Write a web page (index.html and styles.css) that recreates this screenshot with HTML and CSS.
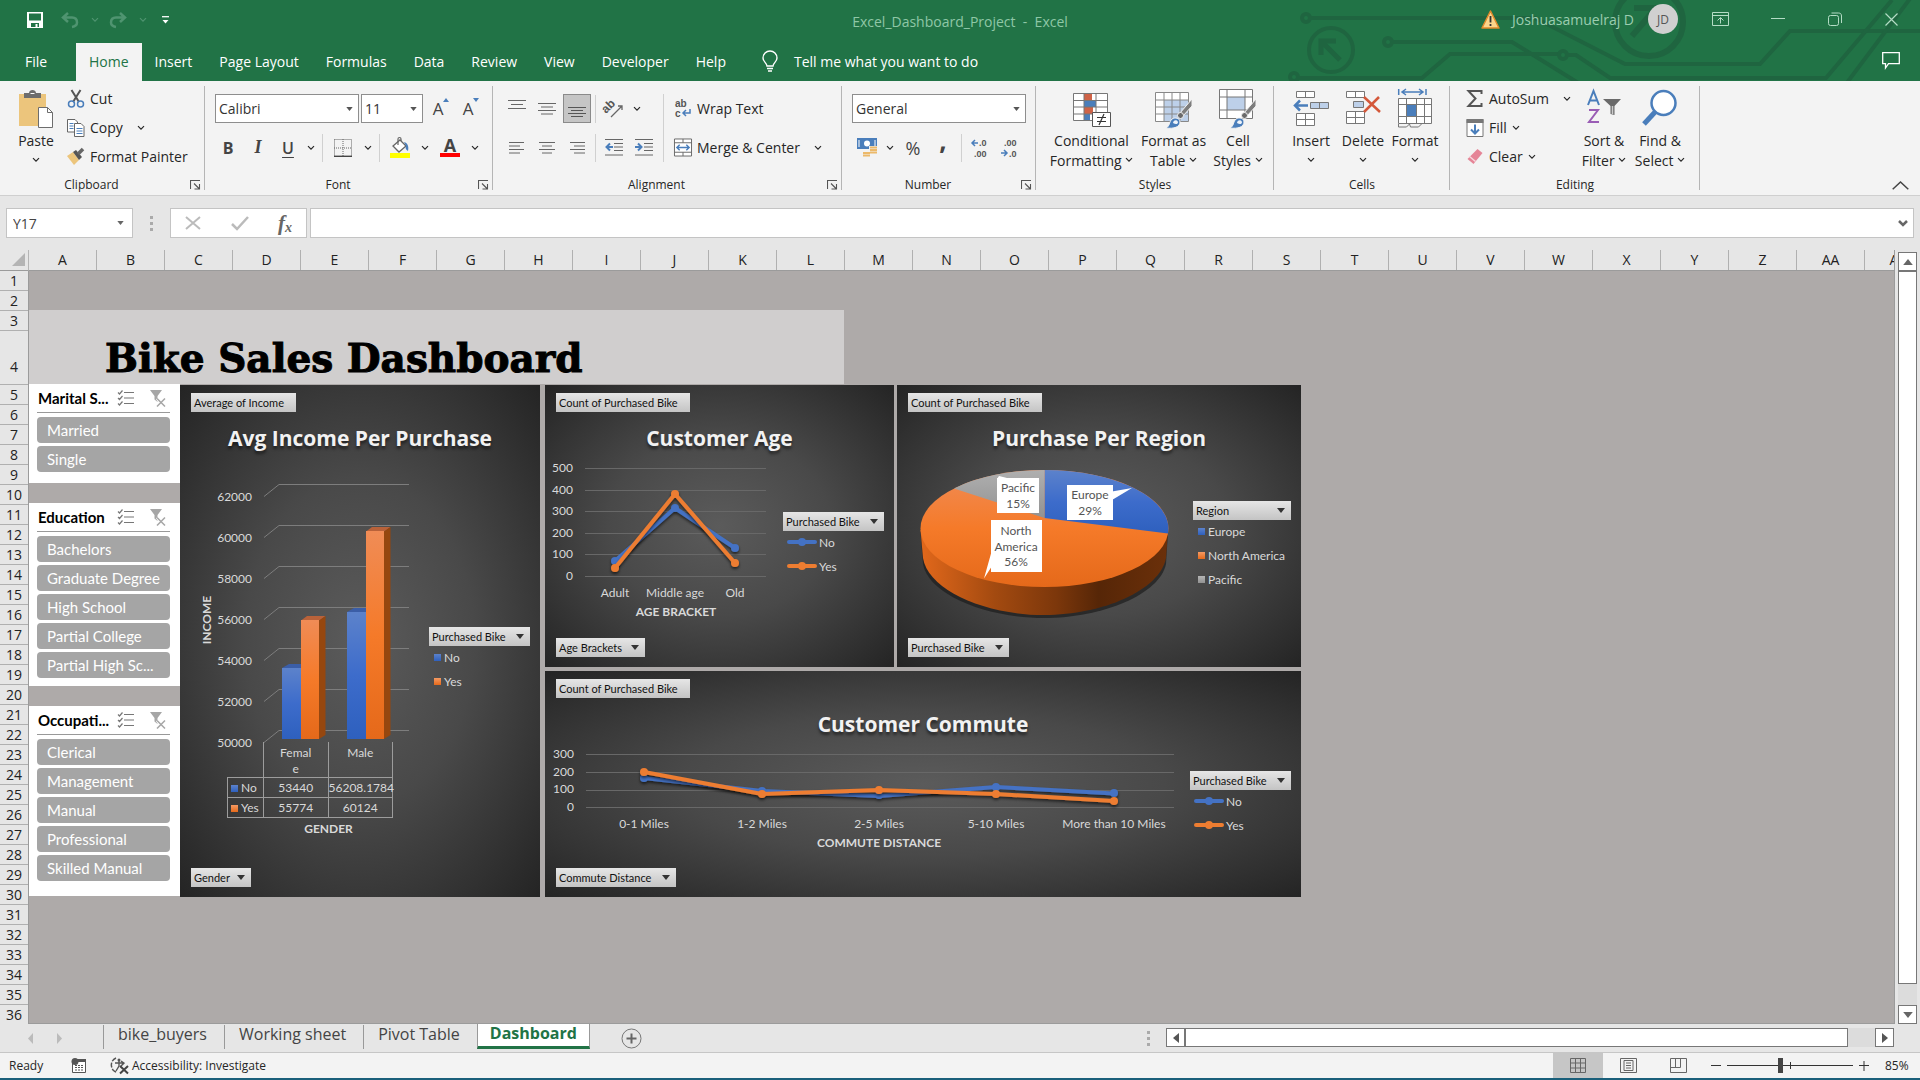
FILE: index.html
```html
<!DOCTYPE html>
<html lang="en">
<head>
<meta charset="utf-8">
<title>Excel_Dashboard_Project - Excel</title>
<link rel="stylesheet" href="styles.css">
</head>
<body>
<svg class="defs" aria-hidden="true">
  <defs>
    <symbol id="chev" viewBox="0 0 8 6"><path d="M1 1.200 4 4.200 7 1.200" fill="none" stroke="currentColor" stroke-width="1.200"/></symbol>
    <symbol id="tri" viewBox="0 0 8 5"><path d="M0 0h8L4 5z" fill="currentColor"/></symbol>
    <symbol id="launch" viewBox="0 0 11 10"><path d="M.5 9V.5H10M4 3.500l5 5M9.500 4v5H4.500" fill="none" stroke="#555" stroke-width="1.1"/></symbol>
    <symbol id="multi" viewBox="0 0 18 16"><path d="M1 2.500 2.500 4 5.500.5M1 8 2.500 9.500 5.500 6M1 13.500 2.500 15 5.500 11.500M7 2.500h10M7 8h10M7 13.500h10" fill="none" stroke="#777" stroke-width="1.200"/></symbol>
    <symbol id="nofilter" viewBox="0 0 16 17"><path d="M0 0h12L7.500 6v6L4.500 9.500V6z" fill="#a6a6a6"/><path d="M7 8.500l8 8M15 8.500l-8 8" stroke="#fff" stroke-width="3"/><path d="M7 8.500l8 8M15 8.500l-8 8" stroke="#a6a6a6" stroke-width="1.500"/></symbol>
    <symbol id="brush" viewBox="0 0 28 34"><path d="M27 4v7l-9 10-3-3z" fill="#7d7d7d" stroke="#f3f3f3"/><circle cx="15.500" cy="20.500" r="3" fill="#6a6a6a" stroke="#f3f3f3"/><path d="M1 33c4-2 3-6 6-9 3-2 8-1 8 3 0 5-6 7-14 6z" fill="#4a7ebb" stroke="#f3f3f3"/><path d="M8 28c0-3 4-4 5-1 0 2-2 3-5 1z" fill="#eef3fa"/></symbol>
    <linearGradient id="gBlue" x1="0" y1="0" x2="0" y2="1"><stop offset="0" stop-color="#5c82cb"/><stop offset=".5" stop-color="#3d6ccb"/><stop offset="1" stop-color="#2e60be"/></linearGradient>
    <linearGradient id="gOrange" x1="0" y1="0" x2="0" y2="1"><stop offset="0" stop-color="#f08c56"/><stop offset=".5" stop-color="#f57a29"/><stop offset="1" stop-color="#e5691a"/></linearGradient>
    <linearGradient id="gGray" x1="0" y1="0" x2="0" y2="1"><stop offset="0" stop-color="#afafaf"/><stop offset="1" stop-color="#929292"/></linearGradient>
    <linearGradient id="gRim" x1="0" y1="0" x2="1" y2="0"><stop offset="0" stop-color="#e2681b"/><stop offset=".3" stop-color="#a34a10"/><stop offset=".55" stop-color="#7c370b"/><stop offset=".72" stop-color="#562607"/><stop offset="1" stop-color="#6b300a"/></linearGradient>
    <filter id="soft" x="-20%" y="-20%" width="140%" height="150%"><feDropShadow dx="0" dy="2" stdDeviation="1.500" flood-opacity=".6"/></filter>
  </defs>
</svg>

<header class="top">
  <svg class="circuit" viewBox="0 0 640 81" aria-hidden="true">
    <g fill="none" stroke="#1f6540" stroke-width="4">
      <circle cx="26" cy="18" r="4"/><path d="M31 18H255L345 64H480L510 31H640"/>
      <circle cx="108" cy="42" r="4"/><path d="M113 42H232L300 84"/>
      <circle cx="14" cy="77" r="4"/><path d="M19 78H142L170 54H278"/><circle cx="283" cy="55" r="4"/><path d="M288 55H296L330 78H546L612 0M566 84 632-4"/>
      <circle cx="51" cy="50" r="22"/><path d="M41 55V41H56M42 42 60 60" stroke-width="5"/>
      <circle cx="369" cy="22" r="34" stroke-width="6"/><path d="M354 8H376V26M376 8 352 36" stroke-width="6"/>
    </g>
  </svg>
  <div class="titlebar">
    <div class="quick">
      <button class="q" aria-label="Save"><svg width="16" height="16" viewBox="0 0 16 16"><path d="M0 0h16v16H0z" fill="#fff"/><path d="M2 1.500h12v7H2z" fill="#217346"/><path d="M4 11h8v4H4z" fill="#217346"/><path d="M8.500 12h2v3h-2z" fill="#fff"/></svg></button>
      <button class="q dim" aria-label="Undo"><svg width="18" height="16" viewBox="0 0 18 16"><path d="M7 1 2 5.500 7 10M2 5.500h9c4 0 5 3 5 5s-2 4-5 4.500" fill="none" stroke="currentColor" stroke-width="2.500"/></svg></button>
      <button class="q dim c" aria-label="Undo list"><svg width="8" height="6"><use href="#chev"/></svg></button>
      <button class="q dim" aria-label="Redo"><svg width="18" height="16" viewBox="0 0 18 16"><path d="M11 1l5 4.500L11 10M16 5.500H7c-4 0-5 3-5 5s2 4 5 4.500" fill="none" stroke="currentColor" stroke-width="2.500"/></svg></button>
      <button class="q dim c" aria-label="Redo list"><svg width="8" height="6"><use href="#chev"/></svg></button>
      <button class="q last" aria-label="Customize"><svg width="7" height="8" viewBox="0 0 7 8"><path d="M0 .7h7" stroke="#fff" stroke-width="1.300"/><path d="M.5 4h6L3.500 7.500z" fill="#fff"/></svg></button>
    </div>
    <div class="doc">Excel_Dashboard_Project &nbsp;- &nbsp;Excel</div>
    <div class="account">
      <svg width="19" height="19" viewBox="0 0 19 19"><path d="M9.500 1 18 18H1z" fill="#fcd58b" stroke="#e08a2c" stroke-width="1.500" stroke-linejoin="round"/><path d="M9.500 6v6.500M9.500 14v2" stroke="#333" stroke-width="1.800"/></svg>
      <span class="user">Joshuasamuelraj D</span>
      <span class="avatar">JD</span>
      <button class="win" aria-label="Ribbon options"><svg width="17" height="14" viewBox="0 0 17 14"><path d="M.5.5h16v13H.5zM.5 3.500h16M8.500 11.500V6M5.500 8.500l3-3 3 3" fill="none" stroke="currentColor"/></svg></button>
      <button class="win" aria-label="Minimize"><svg width="14" height="14" viewBox="0 0 14 14"><path d="M0 6.500h14" stroke="currentColor"/></svg></button>
      <button class="win" aria-label="Restore"><svg width="14" height="14" viewBox="0 0 14 14"><rect x=".5" y="3.500" width="10" height="10" rx="2" fill="none" stroke="currentColor"/><path d="M3.500 1h7c2 0 3 1 3 3v7" fill="none" stroke="currentColor"/></svg></button>
      <button class="win" aria-label="Close"><svg width="13" height="13" viewBox="0 0 13 13"><path d="M.5.5l12 12M12.500.5l-12 12" stroke="currentColor" stroke-width="1.200"/></svg></button>
    </div>
  </div>
  <nav class="tabs">
    <a href="#" class="file">File</a><a href="#" class="on">Home</a><a href="#">Insert</a><a href="#">Page Layout</a><a href="#">Formulas</a><a href="#">Data</a><a href="#">Review</a><a href="#">View</a><a href="#">Developer</a><a href="#">Help</a>
    <a href="#" class="tell"><svg width="16" height="21" viewBox="0 0 16 21"><path d="M5 15c0-3-4-4-4-8a7 7 0 0 1 14 0c0 4-4 5-4 8zM5 17.500h6M6 20h4" fill="none" stroke="#fff" stroke-width="1.400"/></svg>Tell me what you want to do</a>
    <button class="comment" aria-label="Comments"><svg width="18" height="17" viewBox="0 0 18 17"><path d="M.7.7h16.600v11H6.500L3.500 16v-4.300H.7z" fill="none" stroke="#fff" stroke-width="1.300"/></svg></button>
  </nav>
</header>

<section class="ribbon">
  <div class="group g-clip">
    <div class="body">
      <button class="big paste"><svg class="ic" width="34" height="40" viewBox="0 0 34 40"><path d="M0 5h27v32H0z" fill="#ecc57c"/><path d="M5 9V4h5c0-4 7-4 7 0h5v5z" fill="#6d6d6d"/><path d="M11.500 4.500h4" stroke="#fff"/><path d="M19.500 18.500h9l5 5v15h-14z" fill="#fff" stroke="#6d6d6d"/><path d="M28.500 18.500v5h5" fill="none" stroke="#6d6d6d"/></svg><span>Paste</span><svg class="cv" width="8" height="6"><use href="#chev"/></svg></button>
      <div class="stack">
        <button class="line"><svg class="si" width="17" height="18" viewBox="0 0 17 18"><path d="M4 0 11.500 12M13 0 5.500 12" stroke="#555" stroke-width="2"/><g fill="none" stroke="#4a7ebb" stroke-width="1.500"><circle cx="4" cy="14" r="3"/><circle cx="13" cy="14" r="3"/></g></svg>Cut</button>
        <button class="line"><svg class="si" width="18" height="18" viewBox="0 0 18 18"><path d="M.5.5H8l2.500 2.500v10H.5z" fill="#fff" stroke="#666"/><path d="M2.500 4.500h4M2.500 7h4M2.500 9.500h4" stroke="#4a7ebb"/><path d="M7.500 4.500H14l3 3v10H7.500z" fill="#fff" stroke="#666"/><path d="M9.500 9.500h6M9.500 12h6M9.500 14.500h6" stroke="#4a7ebb"/></svg>Copy<svg class="cv far" width="8" height="6"><use href="#chev"/></svg></button>
        <button class="line"><svg class="si" width="18" height="17" viewBox="0 0 18 17"><path d="M0 8 6 4l6 8-5 5z" fill="#ecc57c"/><path d="M6 4l3-2 6 7-3 3z" fill="#555"/><path d="M11 6 16 1" stroke="#666" stroke-width="3.500"/></svg>Format Painter</button>
      </div>
    </div>
    <div class="label has">Clipboard</div><button class="dlg" aria-label="Clipboard settings"><svg width="11" height="10"><use href="#launch"/></svg></button>
  </div>

  <div class="group g-font">
    <div class="body two">
      <div class="row">
        <label class="combo family"><select aria-label="Font"><option>Calibri</option></select><svg width="7" height="4"><use href="#tri"/></svg></label>
        <label class="combo size"><select aria-label="Font size"><option>11</option></select><svg width="7" height="4"><use href="#tri"/></svg></label>
        <button class="ib first" aria-label="Grow font"><span class="ga">A</span><svg class="up" width="6" height="4" viewBox="0 0 6 4"><path d="M0 4h6L3 0z" fill="#4a7ebb"/></svg></button>
        <button class="ib" aria-label="Shrink font"><span class="ga">A</span><svg class="up" width="6" height="4" viewBox="0 0 6 4"><path d="M0 0h6L3 4z" fill="#4a7ebb"/></svg></button>
      </div>
      <div class="row fmt">
        <button class="ib"><b>B</b></button><button class="ib"><i>I</i></button><button class="ib"><u>U</u></button><button class="cb" aria-label="Underline list"><svg width="8" height="6"><use href="#chev"/></svg></button>
        <span class="sep"></span>
        <button class="ib w" aria-label="Borders"><svg width="18" height="18" viewBox="0 0 18 18"><path d="M.5.5h17v17M.5.5v17M9 0v17M0 9h18" fill="none" stroke="#666" stroke-dasharray="1 1"/><path d="M0 17.300h18" stroke="#444" stroke-width="1.400"/></svg></button><button class="cb" aria-label="Borders list"><svg width="8" height="6"><use href="#chev"/></svg></button>
        <span class="sep"></span>
        <button class="ib w" aria-label="Fill color"><svg width="20" height="21" viewBox="0 0 20 21"><path d="M10 3 16 9 9 15 3 9z" fill="#fff" stroke="#666" stroke-width="1.300"/><path d="M8 8V2c0-2 3-2 3 0v2" fill="none" stroke="#666" stroke-width="1.200"/><path d="M14 5c4 1 5 5 4 9-2-1-3-3-2-5z" fill="#4a7ebb"/><path d="M0 16h20v5H0z" fill="#ff0"/></svg></button><button class="cb" aria-label="Fill color list"><svg width="8" height="6"><use href="#chev"/></svg></button>
        <button class="ib w colour" aria-label="Font color"><span>A</span></button><button class="cb" aria-label="Font color list"><svg width="8" height="6"><use href="#chev"/></svg></button>
      </div>
    </div>
    <div class="label has">Font</div><button class="dlg" aria-label="Font settings"><svg width="11" height="10"><use href="#launch"/></svg></button>
  </div>

  <div class="group g-align">
    <div class="body two cols">
      <div class="rows">
        <div class="row">
          <button class="ib" aria-label="Top align"><svg width="18" height="18" viewBox="0 0 18 18"><path d="M0 .5h18M3 4.500h12M0 8.500h18" stroke="#666"/></svg></button>
          <button class="ib" aria-label="Middle align"><svg width="18" height="12" viewBox="0 0 18 12"><path d="M0 .5h18M3 4h12M0 7.500h18M3 11h12" stroke="#666"/></svg></button>
          <button class="ib sel" aria-label="Bottom align"><svg width="18" height="18" viewBox="0 0 18 18"><path d="M0 7.500h18M3 10.500h12M0 13.500h18M3 16.500h12" stroke="#555"/></svg></button>
          <span class="sep"></span>
          <button class="ib" aria-label="Orientation"><svg width="20" height="20" viewBox="0 0 20 20"><text class="ict" x="2" y="15" transform="rotate(-45 2 15)" font-size="12">ab</text><path d="M7 18 18 7M18 11V7h-4" fill="none" stroke="#666" stroke-width="1.300"/></svg></button><button class="cb" aria-label="Orientation list"><svg width="8" height="6"><use href="#chev"/></svg></button>
        </div>
        <div class="row">
          <button class="ib" aria-label="Align left"><svg width="16" height="12" viewBox="0 0 16 12"><path d="M0 .5h15M0 4h11M0 7.500h15M0 11h11" stroke="#666"/></svg></button>
          <button class="ib" aria-label="Center"><svg width="16" height="12" viewBox="0 0 16 12"><path d="M0 .5h16M3 4h10M0 7.500h16M3 11h10" stroke="#666"/></svg></button>
          <button class="ib" aria-label="Align right"><svg width="16" height="12" viewBox="0 0 16 12"><path d="M1 .5h15M5 4h11M1 7.500h15M5 11h11" stroke="#666"/></svg></button>
          <span class="sep"></span>
          <button class="ib" aria-label="Decrease indent"><svg width="18" height="17" viewBox="0 0 18 17"><path d="M0 .5h18M9 4.500h9M9 8h9M9 11.500h9M0 16h18" stroke="#666"/><path d="M8 8H2M5 4.500 1.500 8 5 11.500" fill="none" stroke="#4a7ebb" stroke-width="2"/></svg></button>
          <button class="ib" aria-label="Increase indent"><svg width="18" height="17" viewBox="0 0 18 17"><path d="M0 .5h18M9 4.500h9M9 8h9M9 11.500h9M0 16h18" stroke="#666"/><path d="M0 8h6M3 4.500 6.500 8 3 11.500" fill="none" stroke="#4a7ebb" stroke-width="2"/></svg></button>
        </div>
      </div>
      <span class="sep tall"></span>
      <div class="rows">
        <button class="line tight"><svg class="si" width="18" height="22" viewBox="0 0 18 22"><text class="ict" x="1" y="9" font-size="10">ab</text><text class="ict" x="1" y="19" font-size="10">c</text><path d="M16 11v4H9M12 12l-3 3 3 3" fill="none" stroke="#4a7ebb" stroke-width="1.500"/></svg>Wrap Text</button>
        <button class="line tight"><svg class="si" width="19" height="19" viewBox="0 0 19 19"><path d="M.5.5h18v18H.5zM.5 4.500h18M.5 14.500h18M9.500.5v4M9.500 14.500v4" fill="#fff" stroke="#666"/><path d="M3 9.500h13M6 6.500l-3 3 3 3M13 6.500l3 3-3 3" fill="none" stroke="#4a7ebb" stroke-width="1.500"/></svg>Merge &amp; Center<svg class="cv far" width="8" height="6"><use href="#chev"/></svg></button>
      </div>
    </div>
    <div class="label has">Alignment</div><button class="dlg" aria-label="Alignment settings"><svg width="11" height="10"><use href="#launch"/></svg></button>
  </div>

  <div class="group g-num">
    <div class="body two">
      <div class="row"><label class="combo number"><select aria-label="Number format"><option>General</option></select><svg width="7" height="4"><use href="#tri"/></svg></label></div>
      <div class="row">
        <button class="ib" aria-label="Currency"><svg width="21" height="19" viewBox="0 0 21 19"><path d="M0 0h20v11H0z" fill="#4a7ebb"/><circle cx="10" cy="5.500" r="3" fill="#fff"/><path d="M2 2v7M18 2v7" stroke="#fff"/><path d="M12 8h8v11H5v-6h7z" fill="#f3f3f3"/><path d="M13 9.500h7M13 12h7M13 14.500h7M6 15h7M6 17.500h7" stroke="#ecb96a" stroke-width="2"/></svg></button><button class="cb" aria-label="Currency list"><svg width="8" height="6"><use href="#chev"/></svg></button>
        <button class="ib pct">%</button><button class="ib"><span class="comma">,</span></button>
        <span class="sep"></span>
        <button class="ib" aria-label="Increase decimal"><svg width="18" height="22" viewBox="0 0 18 22"><text class="ict" x="8" y="9" font-size="9">.0</text><text class="ict" x="3" y="20" font-size="9">.00</text><path d="M7 6H1M4 3 1 6l3 3" fill="none" stroke="#4a7ebb" stroke-width="1.500"/></svg></button>
        <button class="ib" aria-label="Decrease decimal"><svg width="18" height="22" viewBox="0 0 18 22"><text class="ict" x="3" y="9" font-size="9">.00</text><text class="ict" x="8" y="20" font-size="9">.0</text><path d="M0 16h6M3 13l3 3-3 3" fill="none" stroke="#4a7ebb" stroke-width="1.500"/></svg></button>
      </div>
    </div>
    <div class="label has">Number</div><button class="dlg" aria-label="Number settings"><svg width="11" height="10"><use href="#launch"/></svg></button>
  </div>

  <div class="group g-styles">
    <div class="body">
      <button class="big cf"><svg class="ic" width="38" height="40" viewBox="0 0 38 40"><path d="M.5 4.500h34v27H.5z" fill="#fff"/><path d="M11 5h8v6h-8zM11 18h9v7h-9z" fill="#cf6347"/><path d="M11 11h12v7H11zM11 25h6v7h-6z" fill="#4a7ebb"/><path d="M.5 4.500h34v27H.5zM.5 11.500h34M.5 18h34M.5 25h34M11 4v28M23 4v28" fill="none" stroke="#777"/><path d="M19.500 23.500h18v14h-18z" fill="#fff" stroke="#555"/><path d="M24 28.500h9M24 32.500h9M31 25l-5 11" stroke="#333" stroke-width="1.200"/></svg><span>Conditional<br>Formatting <svg class="in" width="8" height="6"><use href="#chev"/></svg></span></button>
      <button class="big fat"><svg class="ic" width="38" height="40" viewBox="0 0 38 40"><path d="M.5 3.500h33v29H.5z" fill="#fff"/><path d="M9 11h24v21H9z" fill="#bdd0e9"/><path d="M.5 3.500h33v29H.5zM.5 11h33M.5 18h33M.5 25h33M9 3v29M17 3v29M25 3v29" fill="none" stroke="#888"/><use href="#brush" x="10" y="6" width="28" height="34"/></svg><span>Format as<br>Table <svg class="in" width="8" height="6"><use href="#chev"/></svg></span></button>
      <button class="big cs"><svg class="ic" width="38" height="40" viewBox="0 0 38 40"><path d="M.5.5h33v29H.5z" fill="#fff"/><path d="M8 8h18v13H8z" fill="#bdd0e9"/><path d="M.5.5h33v29H.5zM.5 8h33M.5 21h33M8 0v30M26 0v30" fill="none" stroke="#777"/><use href="#brush" x="10" y="6" width="28" height="34"/></svg><span>Cell<br>Styles <svg class="in" width="8" height="6"><use href="#chev"/></svg></span></button>
    </div>
    <div class="label">Styles</div>
  </div>

  <div class="group g-cells">
    <div class="body">
      <button class="big"><svg class="ic" width="36" height="40" viewBox="0 0 36 40"><g fill="#fff" stroke="#777"><path d="M3.500 2.500h18v6h-18zM12.500 2.500v6M3.500 24.500h18v12h-18zM3.500 30.500h18M12.500 24.500v12"/><path d="M17.500 13.500h18v6h-18zM26.500 13.500v6" fill="#bdd0e9"/></g><path d="M15 16.500H2M7 11.500l-5 5 5 5" fill="none" stroke="#4a7ebb" stroke-width="2.500"/></svg><span>Insert</span><svg class="cv" width="8" height="6"><use href="#chev"/></svg></button>
      <button class="big"><svg class="ic" width="36" height="40" viewBox="0 0 36 40"><g fill="#fff" stroke="#777"><path d="M1.500 2.500h18v6h-18zM10.500 2.500v6M1.500 22.500h18v12h-18zM1.500 28.500h18M10.500 22.500v12"/><path d="M8.500 12.500h10v6h-10z" fill="#bdd0e9"/></g><path d="M19 8l16 15M34 8 19 23" stroke="#d4583a" stroke-width="2.500"/></svg><span>Delete</span><svg class="cv" width="8" height="6"><use href="#chev"/></svg></button>
      <button class="big"><svg class="ic" width="34" height="40" viewBox="0 0 34 40"><path d="M.7 0v6M28 0v6M4 3h21M8 0 4 3l4 3M21 0l4 3-4 3" fill="none" stroke="#4a7ebb" stroke-width="1.500"/><path d="M.5 9.500h33v25H.5z" fill="#fff"/><path d="M9 16h9v11H9z" fill="#4a7ebb"/><path d="M.5 9.500h33v25H.5zM.5 15.500h33M.5 27.500h33M8.500 9.500v25M18.500 9.500v25M26.500 9.500v25M.5 35v3h8l3-3 1 3h8l3-3" fill="none" stroke="#777"/></svg><span>Format</span><svg class="cv" width="8" height="6"><use href="#chev"/></svg></button>
    </div>
    <div class="label">Cells</div>
  </div>

  <div class="group g-edit">
    <div class="body">
      <div class="stack">
        <button class="line"><svg class="si" width="17" height="17" viewBox="0 0 17 17"><path d="M15 4V1H2l7 7.500L2 16h13v-3" fill="none" stroke="#555" stroke-width="2"/></svg>AutoSum<svg class="cv far" width="8" height="6"><use href="#chev"/></svg></button>
        <button class="line"><svg class="si" width="17" height="18" viewBox="0 0 17 18"><path d="M.5.5h16v17H.5z" fill="#fff" stroke="#777"/><path d="M0 0h17v4H0z" fill="#777"/><path d="M8.500 5.500v9M4.500 10.500l4 4 4-4" fill="none" stroke="#4a7ebb" stroke-width="2"/></svg>Fill<svg class="cv" width="8" height="6"><use href="#chev"/></svg></button>
        <button class="line"><svg class="si" width="17" height="17" viewBox="0 0 17 17"><path d="M11 1 16 5 7 16 1 11z" fill="#e58597"/><path d="M3 8.500l6 5" stroke="#f7d9de" stroke-width="1.500"/></svg>Clear<svg class="cv" width="8" height="6"><use href="#chev"/></svg></button>
      </div>
      <button class="big sf"><svg class="ic" width="34" height="40" viewBox="0 0 34 40"><path d="M1 16 6.500 2 12 16M3 11.500h7" fill="none" stroke="#4a7ebb" stroke-width="2"/><path d="M2 21h9L2 33h10" fill="none" stroke="#9a5db5" stroke-width="2"/><path d="M16 10h18l-6.500 7v9l-4-1v-8z" fill="#6a6a6a"/><path d="M25.500 17v8" stroke="#ccc" stroke-width="1.500"/></svg><span>Sort &amp;<br>Filter <svg class="in" width="8" height="6"><use href="#chev"/></svg></span></button>
      <button class="big sf"><svg class="ic" width="36" height="40" viewBox="0 0 36 40"><path d="M14 22 2 35" stroke="#4a7ebb" stroke-width="5"/><circle cx="21.500" cy="14" r="12" fill="#fff" stroke="#4a7ebb" stroke-width="2.500"/></svg><span>Find &amp;<br>Select <svg class="in" width="8" height="6"><use href="#chev"/></svg></span></button>
    </div>
    <div class="label">Editing</div>
  </div>
  <button class="collapse" aria-label="Collapse ribbon"><svg width="17" height="9" viewBox="0 0 17 9"><path d="M.7 8.300 8.500 1l7.800 7.300" fill="none" stroke="#444" stroke-width="1.500"/></svg></button>
</section>

<section class="formula">
  <label class="namebox"><input aria-label="Name box" value="Y17"><svg width="7" height="4"><use href="#tri"/></svg></label>
  <span class="dots"><i></i><i></i><i></i></span>
  <div class="fx">
    <button aria-label="Cancel"><svg width="16" height="14" viewBox="0 0 16 14"><path d="M1 1l14 12M15 1 1 13" stroke="#bbb" stroke-width="2"/></svg></button>
    <button aria-label="Enter"><svg width="18" height="14" viewBox="0 0 18 14"><path d="M1 8l5 5L17 1" fill="none" stroke="#bbb" stroke-width="2.500"/></svg></button>
    <button class="fn" aria-label="Insert function">f<sub>x</sub></button>
  </div>
  <label class="bar"><input aria-label="Formula bar" value=""><svg width="10" height="7" viewBox="0 0 10 7"><path d="M1 1l4 4 4-4" fill="none" stroke="#666" stroke-width="2.500"/></svg></label>
</section>

<main class="sheet">
  <div class="corner"><svg width="13" height="13" viewBox="0 0 13 13"><path d="M13 0v13H0z" fill="#b4b4b4"/></svg></div>
  <div class="colheads"><span>A</span><span>B</span><span>C</span><span>D</span><span>E</span><span>F</span><span>G</span><span>H</span><span>I</span><span>J</span><span>K</span><span>L</span><span>M</span><span>N</span><span>O</span><span>P</span><span>Q</span><span>R</span><span>S</span><span>T</span><span>U</span><span>V</span><span>W</span><span>X</span><span>Y</span><span>Z</span><span>AA</span><span>AB</span></div>
  <div class="vscroll">
    <button aria-label="Scroll up"><svg width="10" height="6" viewBox="0 0 8 5"><path d="M0 5h8L4 0z" fill="#666"/></svg></button>
    <div class="vthumb"></div><div class="vtrack"></div>
    <button aria-label="Scroll down"><svg width="10" height="6" viewBox="0 0 8 5"><path d="M0 0h8L4 5z" fill="#666"/></svg></button>
  </div>
  <div class="rowheads"><span>1</span><span>2</span><span>3</span><span class="tallrow">4</span><span>5</span><span>6</span><span>7</span><span>8</span><span>9</span><span>10</span><span>11</span><span>12</span><span>13</span><span>14</span><span>15</span><span>16</span><span>17</span><span>18</span><span>19</span><span>20</span><span>21</span><span>22</span><span>23</span><span>24</span><span>25</span><span>26</span><span>27</span><span>28</span><span>29</span><span>30</span><span>31</span><span>32</span><span>33</span><span>34</span><span>35</span><span>36</span></div>
  <div class="canvas">
    <div class="banner"><h1>Bike Sales Dashboard</h1></div>
    <div class="dash">
      <div class="slicers">
        <section class="slicer s1"><header><h2>Marital S...</h2><svg width="18" height="16"><use href="#multi"/></svg><svg width="16" height="17"><use href="#nofilter"/></svg></header>
          <button>Married</button><button>Single</button></section>
        <section class="slicer s2"><header><h2>Education</h2><svg width="18" height="16"><use href="#multi"/></svg><svg width="16" height="17"><use href="#nofilter"/></svg></header>
          <button>Bachelors</button><button>Graduate Degree</button><button>High School</button><button>Partial College</button><button>Partial High Sc...</button></section>
        <section class="slicer s3"><header><h2>Occupati...</h2><svg width="18" height="16"><use href="#multi"/></svg><svg width="16" height="17"><use href="#nofilter"/></svg></header>
          <button>Clerical</button><button>Management</button><button>Manual</button><button>Professional</button><button>Skilled Manual</button></section>
      </div>

      <section class="chart income">
        <button class="field">Average of Income</button>
        <h2>Avg Income Per Purchase</h2>
        <div class="plot">
          <div class="left">
            <svg width="235" height="270" viewBox="180 472 235 270">
              <g fill="none" stroke="#7d7d7d"><path d="M264 496.500 279 484.500H409"/><path d="M264 537.500 279 525.500H409"/><path d="M264 578.500 279 566.500H409"/><path d="M264 619.500 279 607.500H409"/><path d="M264 660.500 279 648.500H409"/><path d="M264 701.500 279 689.500H409"/><path d="M264 742.500 279 730.500H409"/></g>
              <g class="ax end"><text x="252" y="501">62000</text><text x="252" y="542">60000</text><text x="252" y="583">58000</text><text x="252" y="624">56000</text><text x="252" y="665">54000</text><text x="252" y="706">52000</text><text x="252" y="747">50000</text></g>
              <text class="axt" x="207" y="624" transform="rotate(-90 207 620)">INCOME</text>
              <path d="M282 668l7-4h18l-6 4z" fill="#3b5ea7"/><rect x="282" y="668" width="19" height="71" fill="url(#gBlue)"/>
              <path d="M301 620.500l6-4.500h18.500l-6 4.500z" fill="#b9623a"/><path d="M319 620.500l6.500-4.500V735l-6.500 4z" fill="#96470f"/><rect x="301" y="620" width="18" height="119" fill="url(#gOrange)"/>
              <path d="M347 612l7-4h18l-6 4z" fill="#3b5ea7"/><rect x="347" y="612" width="19" height="127" fill="url(#gBlue)"/>
              <path d="M366 531.500l6-4.500h18.500l-6 4.500z" fill="#b9623a"/><path d="M384 531.500l6.500-4.500V735l-6.500 4z" fill="#96470f"/><rect x="366" y="531" width="18" height="208" fill="url(#gOrange)"/>
            </svg>
            <table>
              <thead><tr><td class="none"></td><th>Femal<br>e</th><th>Male</th></tr></thead>
              <tbody><tr><th class="k"><i class="sw blue"></i>No</th><td>53440</td><td>56208.1784</td></tr>
              <tr><th class="k"><i class="sw orange"></i>Yes</th><td>55774</td><td>60124</td></tr></tbody>
            </table>
            <div class="axis">GENDER</div>
          </div>
          <div class="legend"><button class="field drop">Purchased Bike<svg width="8" height="5"><use href="#tri"/></svg></button>
            <p><i class="sw blue"></i>No</p><p><i class="sw orange"></i>Yes</p></div>
        </div>
        <button class="field drop foot gender">Gender<svg width="8" height="5"><use href="#tri"/></svg></button>
      </section>

      <div class="right">
        <div class="pair">
          <section class="chart age">
            <button class="field">Count of Purchased Bike</button>
            <h2>Customer Age</h2>
            <div class="plot">
              <svg width="228" height="166" viewBox="545 456 228 166">
                <path d="M585 468.500H766M585 490.500H766M585 511.500H766M585 533.500H766M585 554.500H766M585 576.500H766" stroke="#686868"/>
                <g class="ax end"><text x="573" y="472">500</text><text x="573" y="494">400</text><text x="573" y="515">300</text><text x="573" y="537">200</text><text x="573" y="558">100</text><text x="573" y="580">0</text></g>
                <g filter="url(#soft)"><path d="M615 561 675 508 735 548" fill="none" stroke="#4472c4" stroke-width="4" stroke-linejoin="round"/><g fill="#4472c4"><circle cx="615" cy="561" r="4"/><circle cx="675" cy="508" r="4"/><circle cx="735" cy="548" r="4"/></g></g>
                <g filter="url(#soft)"><path d="M615 568 675 494 735 563" fill="none" stroke="#ed7d31" stroke-width="4" stroke-linejoin="round"/><g fill="#ed7d31"><circle cx="615" cy="568" r="4"/><circle cx="675" cy="494" r="4"/><circle cx="735" cy="563" r="4"/></g></g>
                <g class="ax mid"><text x="615" y="597">Adult</text><text x="675" y="597">Middle age</text><text x="735" y="597">Old</text></g>
                <text class="axt" x="676" y="616">AGE BRACKET</text>
              </svg>
              <div class="legend"><button class="field drop">Purchased Bike<svg width="8" height="5"><use href="#tri"/></svg></button>
                <p><i class="ln blue"></i>No</p><p><i class="ln orange"></i>Yes</p></div>
            </div>
            <button class="field drop foot brackets">Age Brackets<svg width="8" height="5"><use href="#tri"/></svg></button>
          </section>

          <section class="chart region">
            <button class="field">Count of Purchased Bike</button>
            <h2>Purchase Per Region</h2>
            <div class="plot">
              <svg width="286" height="166" viewBox="897 456 286 166">
                <path d="M920.500 530 923 562C928 592 985 616 1044 616S1160 592 1166 562L1168 530z" fill="#1c1c1c" opacity=".7" transform="translate(0 2)"/>
                <path d="M920.500 530 923 558C928 590 985 615 1044 615S1160 590 1166 558L1168 530z" fill="url(#gRim)"/>
                <ellipse cx="1044.500" cy="528.500" rx="124" ry="58.500" fill="url(#gOrange)"/>
                <path d="M1044.500 518V470A124 58.500 0 0 1 1168 533.500z" fill="url(#gBlue)"/>
                <path d="M1044.500 518V470A124 58.500 0 0 0 954 488.500z" fill="url(#gGray)"/>
                <path d="M1112 491.500 1132 488 1112 500zM992 550 984 578.500 992 566zM997 479l2-3 12 3z" fill="#fff"/>
                <path d="M997 478h42v35h-42zM1067 485h46v35h-46zM991 520h51v52h-51z" fill="#fff"/>
                <g class="call"><text x="1018" y="492">Pacific</text><text x="1018" y="508">15%</text><text x="1090" y="499">Europe</text><text x="1090" y="515">29%</text><text x="1016" y="535">North</text><text x="1016" y="551">America</text><text x="1016" y="566">56%</text></g>
              </svg>
              <div class="legend"><button class="field drop">Region<svg width="8" height="5"><use href="#tri"/></svg></button>
                <p><i class="sw blue"></i>Europe</p><p><i class="sw orange"></i>North America</p><p><i class="sw gray"></i>Pacific</p></div>
            </div>
            <button class="field drop foot">Purchased Bike<svg width="8" height="5"><use href="#tri"/></svg></button>
          </section>
        </div>

        <section class="chart commute">
          <button class="field">Count of Purchased Bike</button>
          <h2>Customer Commute</h2>
          <div class="plot">
            <svg width="635" height="112" viewBox="545 742 635 112">
              <path d="M586 754.500H1174M586 772.500H1174M586 790.500H1174M586 807.500H1174" stroke="#686868"/>
              <g class="ax end"><text x="574" y="758">300</text><text x="574" y="776">200</text><text x="574" y="793">100</text><text x="574" y="811">0</text></g>
              <g filter="url(#soft)"><path d="M644 778 762 791 879 796 996 787 1114 793.500" fill="none" stroke="#4472c4" stroke-width="4" stroke-linejoin="round"/><g fill="#4472c4"><circle cx="644" cy="778" r="4"/><circle cx="762" cy="791" r="4"/><circle cx="879" cy="795" r="4"/><circle cx="996" cy="787" r="4"/><circle cx="1114" cy="793" r="4"/></g></g>
              <g filter="url(#soft)"><path d="M644 772 762 794 879 790 996 794 1114 801" fill="none" stroke="#ed7d31" stroke-width="4" stroke-linejoin="round"/><g fill="#ed7d31"><circle cx="644" cy="772" r="4"/><circle cx="762" cy="794" r="4"/><circle cx="879" cy="790" r="4"/><circle cx="996" cy="794" r="4"/><circle cx="1114" cy="801" r="4"/></g></g>
              <g class="ax mid"><text x="644" y="828">0-1 Miles</text><text x="762" y="828">1-2 Miles</text><text x="879" y="828">2-5 Miles</text><text x="996" y="828">5-10 Miles</text><text x="1114" y="828">More than 10 Miles</text></g>
              <text class="axt" x="879" y="847">COMMUTE DISTANCE</text>
            </svg>
            <div class="legend"><button class="field drop">Purchased Bike<svg width="8" height="5"><use href="#tri"/></svg></button>
              <p><i class="ln blue"></i>No</p><p><i class="ln orange"></i>Yes</p></div>
          </div>
          <button class="field drop foot distance">Commute Distance<svg width="8" height="5"><use href="#tri"/></svg></button>
        </section>
      </div>
    </div>
  </div>
</main>

<nav class="sheets">
  <div class="navs"><svg width="5" height="11" viewBox="0 0 5 11"><path d="M5 0v11L0 5.500z" fill="#bbb"/></svg><svg width="5" height="11" viewBox="0 0 5 11"><path d="M0 0v11l5-5.500z" fill="#bbb"/></svg></div>
  <a href="#">bike_buyers</a><a href="#">Working sheet</a><a href="#">Pivot Table</a><a href="#" class="on">Dashboard</a>
  <button class="add" aria-label="New sheet"><svg width="21" height="21" viewBox="0 0 21 21"><circle cx="10.500" cy="10.500" r="9.500" fill="none" stroke="#777"/><path d="M10.500 5.500v10M5.500 10.500h10" stroke="#666" stroke-width="2"/></svg></button>
  <span class="dots"><i></i><i></i><i></i></span>
  <div class="hscroll"><button aria-label="Scroll left"><svg width="6" height="10" viewBox="0 0 6 10"><path d="M6 0v10L0 5z" fill="#555"/></svg></button><div class="hthumb"></div><div class="htrack"></div><button aria-label="Scroll right"><svg width="6" height="10" viewBox="0 0 6 10"><path d="M0 0v10l6-5z" fill="#555"/></svg></button></div>
</nav>

<footer class="status">
  <span class="ready">Ready</span>
  <svg class="rec" width="16" height="15" viewBox="0 0 16 15"><path d="M1.500 2.500h13v12h-13z" fill="#fff" stroke="#555"/><path d="M6 1h9v3H6z" fill="#555"/><circle cx="4" cy="3.500" r="3.500" fill="#555"/><path d="M4 7.500h9M4 9.500h9M4 12h9" stroke="#555" stroke-dasharray="2 1"/></svg>
  <svg class="acc" width="19" height="17" viewBox="0 0 19 17"><path d="M6 1C1 3 0 9 3 13c1 1 2 2 4 2" fill="none" stroke="#555" stroke-width="1.500" stroke-dasharray="5 1.500"/><circle cx="9" cy="3" r="1.500" fill="#555"/><path d="M5 6h9M9 4v5l-3 5M11 4l3 2-3 3" fill="none" stroke="#555" stroke-width="1.400"/><path d="M10 9l8 7.500M18 9l-8 7.500" stroke="#444" stroke-width="2"/></svg>
  <span>Accessibility: Investigate</span>
  <div class="views">
    <button class="on" aria-label="Normal"><svg width="16" height="15" viewBox="0 0 16 15"><path d="M.5.5h15v14H.5zM.5 5h15M.5 10h15M5.500.5v14M10.500.5v14" fill="none" stroke="#666"/></svg></button>
    <button aria-label="Page layout"><svg width="17" height="15" viewBox="0 0 17 15"><path d="M.5.5h16v14H.5zM4 2.500h9v10H4zM6 5h5M6 7.500h5M6 10h5" fill="none" stroke="#666"/></svg></button>
    <button aria-label="Page break"><svg width="17" height="15" viewBox="0 0 17 15"><path d="M.5.5h16v14H.5zM.5 9.500h10v-9M5.500.5v9" fill="none" stroke="#666"/></svg></button>
  </div>
  <button class="pm" aria-label="Zoom out"><svg width="10" height="10" viewBox="0 0 10 10"><path d="M0 4.500h10" stroke="#333"/></svg></button>
  <input class="zoom" type="range" min="0" max="100" value="42" aria-label="Zoom">
  <button class="pm" aria-label="Zoom in"><svg width="10" height="10" viewBox="0 0 10 10"><path d="M0 4.500h10M5 0v10" stroke="#333"/></svg></button>
  <span class="pctv">85%</span>
</footer>
</body>
</html>
```
FILE: styles.css
```css
* { box-sizing: border-box; }
html, body { height: 100%; }
body {
  margin: 0;
  display: flex;
  flex-direction: column;
  overflow: hidden;
  font-family: "Open Sans", "Noto Sans", sans-serif;
  font-size: 14px;
  color: #262626;
  background: #e6e6e6;
  border-bottom: 2px solid #1a5f7a;
}
button, input, select { font: inherit; color: inherit; border: 0; background: none; padding: 0; margin: 0; }
a { color: inherit; text-decoration: none; }
h1, h2, p { margin: 0; }
svg { display: block; flex: none; overflow: visible; }
i { font-style: normal; }
.defs { width: 0; height: 0; position: absolute; }
.ict { font-family: "Liberation Sans", sans-serif; font-weight: bold; fill: #555; }

/* title bar and tabs */
.top { position: relative; background: #217346; color: #fff; flex: none; }
.circuit { position: absolute; right: 0; top: 0; width: 640px; height: 81px; overflow: hidden; }
.titlebar { position: relative; display: grid; grid-template-columns: 1fr auto 1fr; align-items: center; height: 40px; }
.quick { display: flex; align-items: center; padding-left: 27px; }
.q { width: 16px; display: flex; justify-content: center; margin-right: 18px; }
.q.dim { width: 18px; color: #4f9470; margin-right: 8px; }
.q.dim.c { width: 16px; margin-right: 6px; }
.q.last { margin: 0; }
.doc { color: #8fc7a6; padding-top: 2px; }
.account { display: flex; align-items: center; justify-content: flex-end; color: #9bcdb0; height: 38px; align-self: start; }
.user { margin: 0 14px 0 12px; }
.avatar { width: 30px; height: 30px; border-radius: 50%; background: #d0d0d0; color: #555; display: flex; align-items: center; justify-content: center; margin-right: 14px; font-size: 12px; }
.win { width: 57px; height: 36px; display: flex; align-items: center; justify-content: center; color: #b4dcc5; }
.tabs { position: relative; display: flex; height: 41px; align-items: flex-end; }
.tabs a { height: 38px; line-height: 38px; padding: 0 14px 0 13px; white-space: nowrap; }
.tabs .file { width: 76px; padding-left: 25px; }
.tabs .on { background: #f3f3f3; color: #217346; padding-right: 13px; }
.tabs .tell { display: flex; gap: 16px; padding-left: 22px; }
.tabs .tell svg { margin-top: 8px; }
.comment { margin-left: auto; margin-right: 20px; align-self: center; }

/* ribbon */
.ribbon { display: flex; flex: none; height: 115px; background: #f3f3f3; border-bottom: 1px solid #cfcfcf; }
.group { display: grid; grid-template-columns: minmax(0, 1fr); grid-template-rows: 94px 20px; position: relative; flex: none; }
.group::after { content: ""; position: absolute; right: 0; top: 5px; bottom: 5px; border-right: 1px solid #b5b5b5; }
.body { grid-area: 1 / 1; display: flex; }
.label { grid-area: 2 / 1; font-size: 12px; line-height: 20px; text-align: center; }
.label.has { padding-right: 22px; }
.dlg { grid-area: 2 / 1; justify-self: end; align-self: center; margin-right: 4px; }
.g-clip { width: 205px; } .g-font { width: 288px; } .g-align { width: 349px; } .g-num { width: 194px; }
.g-styles { width: 238px; } .g-cells { width: 176px; } .g-edit { width: 250px; }
.g-clip .body { padding-left: 10px; }
.g-styles .body { padding-left: 9px; }
.g-cells .body { padding-left: 11px; }
.g-edit .body { padding-left: 16px; }
.big { display: flex; flex-direction: column; align-items: center; padding-top: 8px; width: 52px; line-height: 20px; }
.big .ic { margin-bottom: 2px; }
.big .cv { margin-top: 6px; }
.big span { white-space: nowrap; }
.big .in { display: inline-block; vertical-align: 3px; }
.cf { width: 93px; } .fat { width: 71px; } .cs { width: 58px; } .sf { width: 56px; }
.stack { display: flex; flex-direction: column; padding-top: 3px; }
.g-clip .stack { margin-left: 5px; }
.g-edit .stack { width: 110px; }
.line { display: flex; align-items: center; height: 29px; gap: 5px; white-space: nowrap; }
.line .far { margin-left: 9px; }
.si { width: 18px; }
.two { flex-direction: column; gap: 10px; padding-top: 13px; padding-left: 10px; }
.two.cols { flex-direction: row; gap: 0; padding-left: 9px; }
.rows { display: flex; flex-direction: column; gap: 10px; }
.row { display: flex; align-items: center; height: 29px; }
.fmt { margin-left: -2px; }
.ib { flex: none; width: 30px; height: 29px; display: flex; align-items: center; justify-content: center; color: #444; font-size: 16px; }
.ib.w { width: 34px; }
.ib.sel { background: #c5c5c5; border: 1px solid #8a8a8a; width: 28px; margin: 0 1px; }
.ib i { font-style: italic; font-family: "Liberation Serif", serif; font-weight: bold; font-size: 18px; }
.ib u { font-weight: 600; text-underline-offset: 3px; }
.ib.first { margin-left: 3px; }
.ga { font-size: 17px; }
.up { align-self: flex-start; margin-top: 4px; }
.colour { padding-bottom: 2px; }
.colour span { width: 20px; height: 20px; line-height: 16px; font-size: 18px; font-weight: bold; border-bottom: 4px solid #f00; text-align: center; }
.ib.pct { font-size: 18px; }
.comma { font-size: 26px; font-weight: bold; line-height: 10px; height: 26px; }
.cb { width: 16px; display: flex; justify-content: center; flex: none; }
.sep { flex: none; width: 1px; height: 28px; background: #d0d0d0; margin: 0 3px; }
.sep.tall { height: 68px; margin: 0 10px 0 4px; }
.g-align .rows:first-child { width: 157px; }
.combo { display: flex; align-items: center; background: #fff; border: 1px solid #8e8e8e; height: 29px; padding-right: 5px; color: #555; }
.combo select { appearance: none; flex: 1; min-width: 0; padding-left: 3px; color: #333; }
.family { width: 144px; margin-right: 2px; } .size { width: 62px; } .number { width: 174px; }
.collapse { margin: 100px 11px 0 auto; align-self: flex-start; }

/* formula bar */
.formula { display: flex; align-items: center; flex: none; padding: 12px 6px; height: 54px; }
.namebox, .bar, .fx { height: 30px; background: #fff; border: 1px solid #c4c4c4; display: flex; align-items: center; }
.namebox { width: 127px; padding: 0 8px 0 6px; color: #666; }
.namebox input, .bar input { flex: 1; min-width: 0; outline: 0; color: #444; }
.dots { display: flex; flex-direction: column; gap: 3px; width: 3px; }
.dots i { width: 3px; height: 3px; background: #aaa; }
.formula .dots { margin: 0 17px; }
.fx { width: 137px; margin-right: 3px; padding: 0 14px; justify-content: space-between; }
.fn { font: italic bold 21px "Liberation Serif", serif; color: #666; }
.fn sub { font-size: 14px; vertical-align: -2px; }
.bar { flex: 1; padding-right: 5px; }

/* worksheet */
.sheet { flex: 1; min-height: 0; display: grid; grid-template-columns: 29px minmax(0, 1fr) 26px; grid-template-rows: 21px minmax(0, 1fr); }
.corner { display: flex; justify-content: flex-end; align-items: flex-end; padding: 0 3px 4px 0; border-right: 1px solid #b5b5b5; border-bottom: 1px solid #9b9b9b; }
.colheads { display: flex; overflow: hidden; border-bottom: 1px solid #9b9b9b; }
.colheads span { flex: 0 0 68px; text-align: center; line-height: 20px; border-right: 1px solid #b0b0b0; color: #222; }
.vscroll { grid-row: 1 / 3; grid-column: 3; display: flex; flex-direction: column; padding: 2px 3px 0; background: #e6e6e6; border-left: 1px solid #9b9b9b; }
.vscroll button, .hscroll button { flex: none; width: 19px; height: 19px; background: #fff; border: 1px solid #777; display: flex; align-items: center; justify-content: center; }
.vthumb { flex: 1; width: 19px; background: #fff; border: 1px solid #777; }
.vtrack { height: 21px; width: 19px; background: #dcdcdc; }
.rowheads { overflow: hidden; border-right: 1px solid #9b9b9b; }
.rowheads span { display: flex; height: 20px; align-items: center; justify-content: center; border-bottom: 1px solid #b0b0b0; color: #222; }
.rowheads .tallrow { height: 54px; align-items: flex-end; padding-bottom: 8px; }
.canvas { background: #aeaaa9; padding-top: 39px; overflow: hidden; border-bottom: 1px solid #9b9b9b; }
.banner { width: 815px; height: 74px; background: #d0cece; padding: 24px 0 0 76px; }
.banner h1 { font: bold 39px/48px "DejaVu Serif", serif; color: #000; white-space: nowrap; -webkit-text-stroke: 1px #000; }
.dash { display: flex; align-items: flex-start; }
.slicers { width: 151px; flex: none; display: flex; flex-direction: column; gap: 20px; }
.slicer { background: #fff; padding: 0 10px 0 8px; display: flex; flex-direction: column; gap: 3px; }
.s1 { height: 99px; } .s2 { height: 183px; } .s3 { height: 190px; }
.slicer header { display: flex; align-items: center; height: 29px; border-bottom: 1px solid #999; font-family: Lato, sans-serif; }
.slicer h2 { font-size: 15px; width: 80px; padding-left: 1px; color: #000; white-space: nowrap; }
.slicer header svg:last-child { margin-left: auto; margin-right: 4px; }
.slicer button { height: 26px; background: #a5a5a5; border-radius: 4px; color: #fff; text-align: left; padding-left: 10px; font-family: Lato, sans-serif; font-size: 15px; }
.slicer header + button { margin-top: 1px; }

/* charts */
.chart { display: flex; flex-direction: column; align-items: flex-start; padding: 8px 0 10px; background: radial-gradient(ellipse farthest-corner at center, #5b5b5b 0%, #494949 45%, #242424 100%); font-family: Lato, sans-serif; font-size: 12px; color: #d9d9d9; }
.income, .right { margin-top: 1px; }
.chart h2 { align-self: stretch; text-align: center; font: bold 21px/28px "Open Sans", "Noto Sans", sans-serif; color: #f2f2f2; text-shadow: 0 3px 3px rgba(0, 0, 0, .5); margin-top: 12px; }
.field { width: 134px; height: 19px; margin-left: 11px; padding: 0 3px; text-align: left; background: linear-gradient(#e6e6e6, #c4c4c4); color: #111; font-size: 11px; white-space: nowrap; }
.drop { display: flex; align-items: center; justify-content: space-between; width: 101px; padding-right: 6px; }
.drop svg { color: #333; }
.foot { margin-top: auto; }
.gender { width: 60px; } .brackets { width: 89px; } .distance { width: 120px; }
.income > .field:first-child { width: 105px; }
.plot { display: flex; align-self: stretch; margin-top: 4px; }
.income { width: 360px; height: 512px; flex: none; }
.right { margin-left: 5px; width: 756px; display: flex; flex-direction: column; gap: 4px; flex: none; }
.pair { display: flex; gap: 3px; }
.age { width: 349px; height: 282px; }
.region { width: 404px; height: 282px; }
.commute { height: 226px; }
.ax text, .axt, .call text { font-family: Lato, sans-serif; font-size: 12px; fill: #d9d9d9; }
.ax.end text { text-anchor: end; }
.ax.mid text, .axt, .call text { text-anchor: middle; }
.call text { fill: #555; }
.axt { font-weight: bold; }
.axis { font-weight: bold; text-align: center; line-height: 22px; margin-left: 62px; }
.income .plot { margin-top: 20px; }
.left { width: 235px; }
.left table { border-collapse: collapse; table-layout: fixed; width: 166px; margin-left: 47px; }
.left th, .left td { border: 1px solid #9c9c9c; font-weight: normal; text-align: center; padding: 0; height: 20px; line-height: 16px; white-space: nowrap; }
.left thead th { height: 35px; border-top: 0; vertical-align: top; padding-top: 3px; }
.left thead .none { border: 0; width: 36px; }
.left .k { text-align: left; padding-left: 3px; }
.left td { font-size: 12px; }
.sw { display: inline-block; width: 7px; height: 7px; margin-right: 3px; }
.sw.blue { background: linear-gradient(#5c82cb, #2e60be); }
.sw.orange { background: linear-gradient(#f59a63, #e5691a); }
.sw.gray { background: linear-gradient(#b5b5b5, #929292); }
.ln { width: 30px; height: 4px; border-radius: 2px; margin-right: 2px; display: flex; align-items: center; justify-content: center; }
.ln::after { content: ""; width: 8px; height: 8px; border-radius: 50%; background: inherit; }
.ln.blue { background: #4472c4; }
.ln.orange { background: #ed7d31; }
.legend p { display: flex; align-items: center; height: 24px; margin-left: 14px; white-space: nowrap; }
.legend .field { margin-left: 10px; }
.income .legend { margin: 155px 0 0 4px; }
.income .legend p, .region .legend p { margin-left: 15px; }
.age .legend { margin-top: 56px; }
.region .legend { margin-top: 45px; }
.region .legend .drop { width: 98px; }
.commute .legend { margin-top: 29px; }
.legend .field + p { margin-top: -1px; }

/* sheet tabs */
.sheets { display: flex; flex: none; height: 29px; border-bottom: 1px solid #c6c6c6; font-size: 16px; color: #444; }
.navs { display: flex; align-items: center; gap: 24px; width: 103px; padding-left: 28px; }
.sheets a { height: 24px; line-height: 19px; margin-top: 1px; padding: 0 17px 0 14px; border-left: 1px solid #999; white-space: nowrap; }
.sheets .on { margin-top: 0; height: 25px; padding: 0 12px; background: #fff; color: #217346; font-weight: bold; border-bottom: 3px solid #217346; border-right: 1px solid #999; }
.add { margin-left: 31px; }
.sheets .dots { margin: auto 16px auto auto; }
.hscroll { width: 728px; display: flex; margin: 4px 26px 0 0; }
.hthumb { flex: 1; height: 19px; background: #fff; border: 1px solid #777; }
.htrack { width: 27px; height: 19px; background: #dcdcdc; }

/* status bar */
.status { display: flex; align-items: center; flex: none; height: 25px; background: #f3f3f3; font-size: 12px; padding-right: 9px; }
.ready { width: 62px; padding-left: 9px; }
.rec { margin: 0 23px 0 9px; }
.acc { margin-right: 3px; }
.views { display: flex; margin-left: auto; align-self: stretch; }
.views button { width: 50px; display: flex; align-items: center; justify-content: center; }
.views .on { background: #c6c6c6; }
.pm { margin: 0 6px 0 8px; }
.zoom { appearance: none; width: 126px; height: 15px; background: linear-gradient(#333, #333) center / 100% 1px no-repeat, linear-gradient(#333, #333) center / 1px 7px no-repeat; }
.zoom::-webkit-slider-thumb { appearance: none; width: 5px; height: 15px; background: #444; }
.zoom + .pm { margin: 0 16px 0 6px; }
.pctv { width: 26px; }
```
